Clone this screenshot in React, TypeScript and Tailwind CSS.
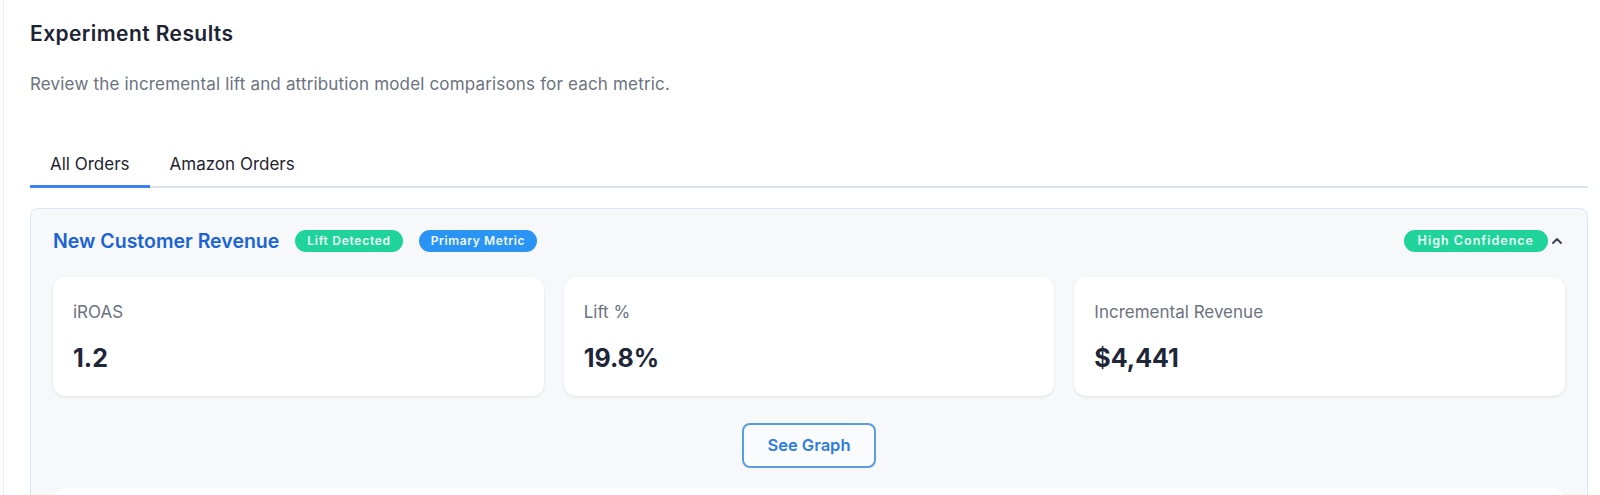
import React from "react";

function Metric({ label, value }: { label: string; value: string }) {
  return (
    <div className="flex-1 rounded-xl bg-white px-5 pt-[24px] pb-[22px] shadow-[0_1px_3px_rgba(15,23,42,0.10)]">
      <div className="text-[17px] leading-[22px] text-[#6b7280]">{label}</div>
      <div className="mt-[19px] text-[25px] font-bold leading-[32px] text-[#1e2638]">{value}</div>
    </div>
  );
}

export default function App() {
  return (
    <div className="min-h-screen bg-white" style={{ fontFamily: "Inter, 'Noto Sans', sans-serif" }}>
      <div className="ml-[3px] min-h-screen border-l border-[#eceef2] pl-[26px] pr-[12px] pt-[20px]">
        <h1 className="text-[21px] font-semibold leading-[28px] tracking-[0.02em] text-[#1c2333]">Experiment Results</h1>
        <p className="mt-[24px] text-[17px] leading-[24px] tracking-[0.01em] text-[#6b7280]">
          Review the incremental lift and attribution model comparisons for each metric.
        </p>

        <div className="mt-[56px] flex border-b-2 border-[#dde3ec]">
          <button className="-mb-[2px] border-b-[3px] border-[#3b82f6] px-5 pb-[9px] text-[17px] leading-[24px] text-[#1f2430]">
            All Orders
          </button>
          <button className="-mb-[2px] border-b-[3px] border-transparent px-5 pb-[9px] text-[17px] leading-[24px] text-[#1f2430]">
            Amazon Orders
          </button>
        </div>

        <div className="mt-[20px] rounded-lg border border-[#dbe8f8] bg-[#f7f8fa] px-[22px] pt-[21px]">
          <div className="flex items-center">
            <div className="flex items-center gap-4">
              <h2 className="text-[19.5px] font-semibold leading-[22px] text-[#1b63d6]">New Customer Revenue</h2>
              <span className="rounded-full bg-[#1fd39b] px-[12px] py-[3px] text-[12px] font-semibold leading-[16px] tracking-[0.06em] text-[#ecfff7]">
                Lift Detected
              </span>
              <span className="rounded-full bg-[#2a94f5] px-[12px] py-[3px] text-[12px] font-semibold leading-[16px] tracking-[0.05em] text-[#eef7ff]">
                Primary Metric
              </span>
            </div>
            <div className="ml-auto flex items-center gap-[1px]">
              <span className="rounded-full bg-[#1fd39b] px-[14px] py-[3px] text-[12.5px] font-semibold leading-[16px] tracking-[0.08em] text-[#ecfff7]">
                High Confidence
              </span>
              <svg width="16" height="16" viewBox="0 0 16 16" fill="none">
                <path d="M4 10 L8 6 L12 10" stroke="#3f4653" strokeWidth="2" strokeLinecap="round" strokeLinejoin="round" />
              </svg>
            </div>
          </div>

          <div className="mt-[25px] flex gap-[20px]">
            <Metric label="iROAS" value="1.2" />
            <Metric label="Lift %" value="19.8%" />
            <Metric label="Incremental Revenue" value="$4,441" />
          </div>

          <div className="mt-[27px] flex justify-center">
            <button className="h-[45px] w-[134px] rounded-lg border-2 border-[#5a9be6] bg-white/40 text-[16.5px] font-semibold text-[#2f7de1]">
              See Graph
            </button>
          </div>

          <div className="mt-[20px] h-[200px] rounded-t-xl bg-white shadow-[0_1px_3px_rgba(15,23,42,0.08)]" />
        </div>
      </div>
    </div>
  );
}
